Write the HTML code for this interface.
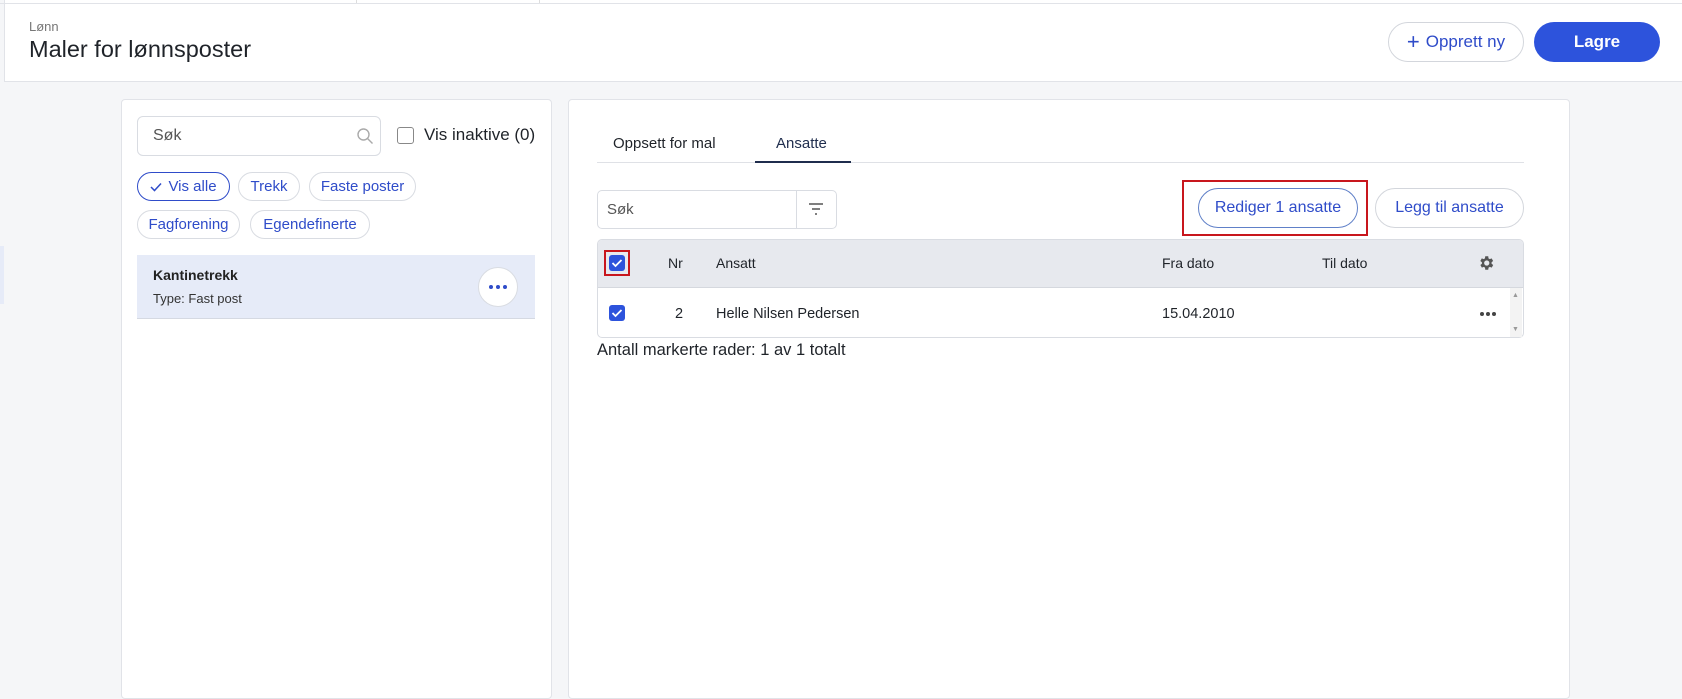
<!DOCTYPE html>
<html><head><meta charset="utf-8"><style>
*{box-sizing:border-box;margin:0;padding:0}
body{width:1682px;height:678px;overflow:hidden;background:#f5f6f8;font-family:"Liberation Sans",sans-serif;color:#1f2329;position:relative}
.a{position:absolute}
.hdr{left:4px;top:0;width:1678px;height:82px;background:#fff;border-bottom:1px solid #e1e3e8;border-left:1px solid #e1e3e8}
.topline{left:0;top:3px;width:1682px;height:1px;background:#e1e3e8}
.btn{position:absolute;border-radius:22px;display:flex;align-items:center;justify-content:center;font-size:17px}
.panel{background:#fff;border:1px solid #e1e3e8;border-radius:4px}
.chip{position:absolute;height:29px;border:1px solid #d9dce2;border-radius:15px;color:#2f4cc9;font-size:15px;display:flex;align-items:center;justify-content:center}
.cb{position:absolute;width:16px;height:16px;border-radius:3px;background:#2d53dc;display:flex;align-items:center;justify-content:center}
.t{position:absolute;font-size:14px;white-space:nowrap;line-height:1}
</style></head><body>
<div class="a hdr"></div>
<div class="a topline"></div>
<div class="a" style="left:356px;top:0;width:1px;height:3px;background:#ddd"></div>
<div class="a" style="left:539px;top:0;width:1px;height:3px;background:#ddd"></div>
<div class="t" style="left:29px;top:20px;font-size:13px;color:#777">Lønn</div>
<div class="t" style="left:29px;top:38px;font-size:23.5px;color:#1f2329">Maler for lønnsposter</div>
<div class="btn" style="left:1388px;top:22px;width:136px;height:40px;border:1px solid #d3d6dc;color:#2f4cc9;background:#fff"><span style="font-size:22px;margin-right:6px;line-height:1">+</span>Opprett ny</div>
<div class="btn" style="left:1534px;top:22px;width:126px;height:40px;background:#2d53dc;color:#fff;font-weight:bold">Lagre</div>
<div class="a" style="left:0;top:246px;width:4px;height:58px;background:#e6ebf8"></div>

<div class="a panel" style="left:121px;top:99px;width:431px;height:600px"></div>
<div class="a" style="left:137px;top:116px;width:244px;height:40px;border:1px solid #d9dce2;border-radius:6px;background:#fff"></div>
<div class="t" style="left:153px;top:128px;font-size:16px;color:#555">Søk</div>
<svg class="a" style="left:356px;top:127px" width="18" height="18" viewBox="0 0 18 18"><circle cx="7.5" cy="7.5" r="5.5" fill="none" stroke="#aaa" stroke-width="1.4"/><path d="M11.5 11.5l5 5" stroke="#aaa" stroke-width="1.4"/></svg>
<div class="a" style="left:397px;top:127px;width:17px;height:17px;border:1.5px solid #888;border-radius:3px"></div>
<div class="t" style="left:424px;top:126px;font-size:17px;color:#1f2329">Vis inaktive (0)</div>
<div class="chip" style="left:137px;top:172px;width:93px;border-color:#2f4cc9"><svg width="12" height="10" style="margin-right:6px"><path d="M1 5l3.5 3.5L11 1.5" fill="none" stroke="#2f4cc9" stroke-width="1.5"/></svg>Vis alle</div>
<div class="chip" style="left:238px;top:172px;width:62px">Trekk</div>
<div class="chip" style="left:309px;top:172px;width:107px">Faste poster</div>
<div class="chip" style="left:137px;top:210px;width:103px">Fagforening</div>
<div class="chip" style="left:250px;top:210px;width:120px">Egendefinerte</div>
<div class="a" style="left:137px;top:255px;width:398px;height:64px;background:#e6ebf8;border-bottom:1px solid #d5d9e2"></div>
<div class="t" style="left:153px;top:268px;font-size:14px;font-weight:bold;color:#222">Kantinetrekk</div>
<div class="t" style="left:153px;top:292px;font-size:13px;color:#333">Type: Fast post</div>
<div class="a" style="left:478px;top:267px;width:40px;height:40px;border-radius:50%;background:#fff;border:1px solid #d9dce2;display:flex;align-items:center;justify-content:center;gap:3px"><i style="width:4px;height:4px;border-radius:50%;background:#2f4cc9"></i><i style="width:4px;height:4px;border-radius:50%;background:#2f4cc9"></i><i style="width:4px;height:4px;border-radius:50%;background:#2f4cc9"></i></div>

<div class="a panel" style="left:568px;top:99px;width:1002px;height:600px"></div>
<div class="t" style="left:613px;top:136px;font-size:15px">Oppsett for mal</div>
<div class="t" style="left:776px;top:136px;font-size:15px;color:#1f2d4d">Ansatte</div>
<div class="a" style="left:597px;top:162px;width:927px;height:1px;background:#dfe1e6"></div>
<div class="a" style="left:755px;top:161px;width:96px;height:2px;background:#1f2d4d"></div>
<div class="a" style="left:597px;top:190px;width:240px;height:39px;border:1px solid #d9dce2;border-radius:5px;background:#fff"></div>
<div class="a" style="left:796px;top:190px;width:1px;height:39px;background:#d9dce2"></div>
<div class="t" style="left:607px;top:202px;font-size:15px;color:#555">Søk</div>
<svg class="a" style="left:807px;top:202px" width="18" height="14"><path d="M2 2h14M5 7h8M8 12h2" stroke="#555" stroke-width="1.6"/></svg>
<div class="a" style="left:1182px;top:180px;width:186px;height:56px;border:2px solid #c8161d"></div>
<div class="btn" style="left:1198px;top:188px;width:160px;height:40px;border:1px solid #6080c8;color:#2f4cc9;font-size:16px;background:#fff">Rediger 1 ansatte</div>
<div class="btn" style="left:1375px;top:188px;width:149px;height:40px;border:1px solid #d3d6dc;color:#2f4cc9;font-size:16px;background:#fff">Legg til ansatte</div>
<div class="a" style="left:597px;top:239px;width:927px;height:99px;border:1px solid #d9dce2;border-radius:5px;background:#fff;overflow:hidden"><div style="height:48px;background:#e7e9ee;border-bottom:1px solid #d5d8de"></div></div>
<div class="a" style="left:604px;top:250px;width:26px;height:26px;border:2px solid #c8161d"></div>
<div class="cb" style="left:609px;top:255px"><svg width="12" height="10"><path d="M1.5 5l3 3L10.5 2" fill="none" stroke="#fff" stroke-width="1.8"/></svg></div>
<div class="cb" style="left:609px;top:305px"><svg width="12" height="10"><path d="M1.5 5l3 3L10.5 2" fill="none" stroke="#fff" stroke-width="1.8"/></svg></div>
<div class="t" style="left:668px;top:256px">Nr</div>
<div class="t" style="left:716px;top:256px">Ansatt</div>
<div class="t" style="left:1162px;top:256px">Fra dato</div>
<div class="t" style="left:1322px;top:256px">Til dato</div>
<svg class="a" style="left:1477px;top:254px" width="18" height="18" viewBox="0 0 24 24"><path fill="#555" d="M19.4 13a7.5 7.5 0 000-2l2.1-1.6-2-3.5-2.5 1a7.6 7.6 0 00-1.7-1L15 3h-4l-.4 2.9a7.6 7.6 0 00-1.7 1l-2.5-1-2 3.5L6.6 11a7.5 7.5 0 000 2l-2.1 1.6 2 3.5 2.5-1a7.6 7.6 0 001.7 1L11 21h4l.4-2.9a7.6 7.6 0 001.7-1l2.5 1 2-3.5zM13 15.5a3.5 3.5 0 110-7 3.5 3.5 0 010 7z"/></svg>
<div class="t" style="left:675px;top:307px;font-size:14.5px">2</div>
<div class="t" style="left:716px;top:307px;font-size:14.5px">Helle Nilsen Pedersen</div>
<div class="t" style="left:1162px;top:307px;font-size:14.5px">15.04.2010</div>
<div class="a" style="left:1480px;top:312px;display:flex;gap:2px"><i style="width:4px;height:4px;border-radius:50%;background:#444"></i><i style="width:4px;height:4px;border-radius:50%;background:#444"></i><i style="width:4px;height:4px;border-radius:50%;background:#444"></i></div>
<div class="a" style="left:1510px;top:288px;width:12px;height:49px;background:#f3f3f3"></div>
<div class="t" style="left:1512px;top:292px;font-size:7px;color:#999">▲</div>
<div class="t" style="left:1512px;top:326px;font-size:7px;color:#999">▼</div>
<div class="t" style="left:597px;top:342px;font-size:16.5px">Antall markerte rader: 1 av 1 totalt</div>
</body></html>
